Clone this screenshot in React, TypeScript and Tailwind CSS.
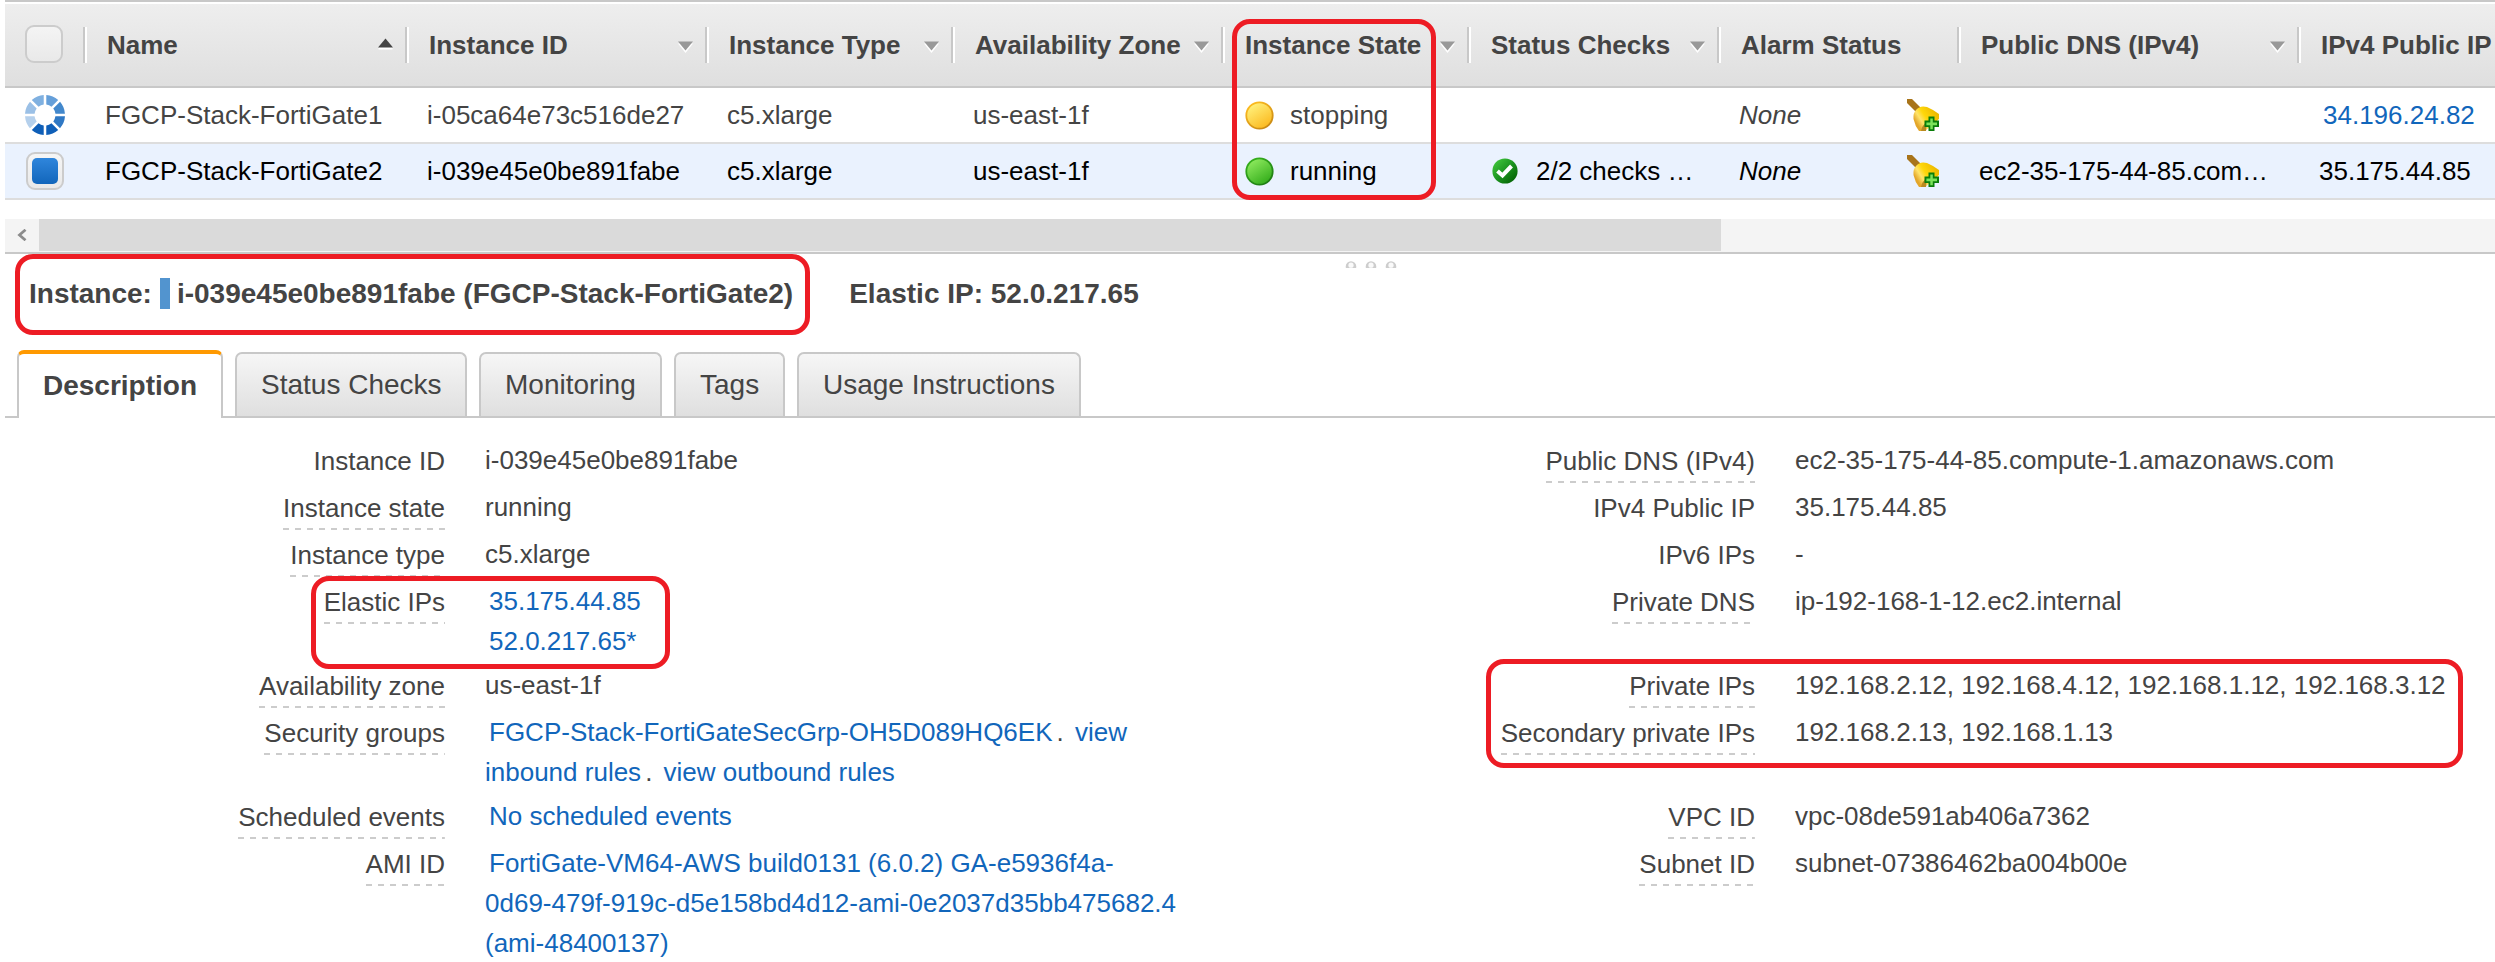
import type { ReactNode } from 'react';

const COLS = 'grid grid-cols-[78px_322px_300px_246px_270px_246px_250px_240px_340px_1fr]';

function Highlight({ className }: { className: string }) {
  return <div className={`absolute rounded-[18px] border-[5px] border-[#ed1c24] ${className}`} />;
}

function SortArrow({ up }: { up?: boolean }) {
  return up ? (
    <svg className="mr-3 mb-[2px] h-3 w-[15px] shrink-0" viewBox="0 0 15 12">
      <path d="M0.5 9.5 L7.5 2.5 L14.5 9.5 V11.5 H0.5Z" fill="#fff" />
      <path d="M0 9.5 L7.5 0.5 L15 9.5Z" fill="#444" />
    </svg>
  ) : (
    <svg className="mr-3 mt-[4px] h-3 w-[15px] shrink-0" viewBox="0 0 15 12">
      <path d="M0 2.5 L7.5 12 L15 2.5Z" fill="#fff" />
      <path d="M0 0.5 L7.5 9.5 L15 0.5Z" fill="#999" />
    </svg>
  );
}

function HeadCell({ label, sort }: { label: string; sort?: 'up' | 'down' }) {
  return (
    <div className="flex h-[82px] items-center">
      <div className="mb-[1px] h-9 w-1 shrink-0 border-l-2 border-r-2 border-l-[#c8c8c8] border-r-white" />
      <div className="flex-1 pl-5 font-bold leading-[82px]">{label}</div>
      {sort && <SortArrow up={sort === 'up'} />}
    </div>
  );
}

function Spinner() {
  const colors = ['#659fd9', '#4388cc', '#2f78c4', '#0f5fb8', '#0f5fb8', '#b5d0ec', '#9bc0e6', '#7fb0e0'];
  return (
    <svg className="ml-5 h-10 w-10" viewBox="-20 -20 40 40">
      {colors.map((c, i) => (
        <path key={i} d="M1.3 -20 A20 20 0 0 1 13.2 -15 L6.5 -8.3 A10.5 10.5 0 0 0 1.3 -10.4 Z" fill={c} transform={`rotate(${i * 45})`} />
      ))}
    </svg>
  );
}

function Ball({ id, from, to, edge }: { id: string; from: string; to: string; edge: string }) {
  return (
    <svg className="h-[29px] w-[29px] shrink-0" viewBox="0 0 29 29">
      <defs>
        <linearGradient id={id} x1="0.2" y1="0.1" x2="0.75" y2="0.95">
          <stop offset="0" stopColor={from} />
          <stop offset="1" stopColor={to} />
        </linearGradient>
        <linearGradient id={`${id}-rim`} x1="0.2" y1="0.1" x2="0.75" y2="0.95">
          <stop offset="0" stopColor={to} />
          <stop offset="1" stopColor={edge} />
        </linearGradient>
      </defs>
      <circle cx="14.5" cy="14.5" r="13.2" fill={`url(#${id})`} stroke={`url(#${id}-rim)`} strokeWidth="1.8" />
    </svg>
  );
}

function CheckBadge() {
  return (
    <svg className="h-[26px] w-[26px] shrink-0" viewBox="0 0 26 26">
      <defs>
        <linearGradient id="badge" x1="0.1" y1="0.1" x2="0.9" y2="0.9">
          <stop offset="0" stopColor="#3fc43a" />
          <stop offset="0.5" stopColor="#1c9420" />
          <stop offset="1" stopColor="#046204" />
        </linearGradient>
      </defs>
      <circle cx="13" cy="13" r="12.6" fill="url(#badge)" />
      <path d="M5.5 13 L10.5 17.5 L19.5 8" fill="none" stroke="#fff" strokeWidth="4" />
    </svg>
  );
}

function Bell() {
  return (
    <svg className="ml-auto mr-[18px] h-8 w-8 shrink-0" viewBox="0 0 32 32">
      <defs>
        <linearGradient id="bell" x1="0.1" y1="0.65" x2="0.85" y2="0.2">
          <stop offset="0" stopColor="#e3a62a" />
          <stop offset="0.25" stopColor="#ffe36a" />
          <stop offset="0.5" stopColor="#ffd70a" />
          <stop offset="1" stopColor="#eebb00" />
        </linearGradient>
      </defs>
      <path d="M0 0 H5 L14 9 L9 13 L0 4Z" fill="#a8741a" />
      <path d="M9 11 Q13 6 20 8 Q27 11 32 15 V20 L18 32 H12 Q8 27 6.5 20 Q6 14 9 11Z" fill="url(#bell)" />
      <path d="M14 32 Q15 26 20 23 L19 32Z" fill="#b98a20" />
      <path d="M21.5 17.5 H27.5 V21.5 H32 V28 H27.5 V32 H21.5 V28 H17.5 V21.5 H21.5Z" fill="#0a7d0a" />
      <path d="M23.3 19.5 H25.8 V23.6 H30 V26.2 H25.8 V30.3 H23.3 V26.2 H19.4 V23.6 H23.3Z" fill="#7be35a" />
    </svg>
  );
}

function TableHeader() {
  return (
    <div className="ml-[5px] border-y-2 border-[#c8c8c8] pt-[2px]">
      <div className={`${COLS} bg-linear-to-b from-[#eeeeee] to-[#dfdfdf] text-[#444]`}>
        <div className="flex h-[82px] items-center">
          <div className="mb-[2px] ml-5 h-[38px] w-[38px] rounded-[9px] border-2 border-[#ccc] bg-linear-to-b from-[#f4f4f4] to-[#e9e9e9]" />
        </div>
        <HeadCell label="Name" sort="up" />
        <HeadCell label="Instance ID" sort="down" />
        <HeadCell label="Instance Type" sort="down" />
        <HeadCell label="Availability Zone" sort="down" />
        <HeadCell label="Instance State" sort="down" />
        <HeadCell label="Status Checks" sort="down" />
        <HeadCell label="Alarm Status" />
        <HeadCell label="Public DNS (IPv4)" sort="down" />
        <HeadCell label="IPv4 Public IP" />
      </div>
    </div>
  );
}

function Cell({ children }: { children?: ReactNode }) {
  return <div className="flex h-[54px] items-center pl-[22px] leading-[54px]">{children}</div>;
}

function Field({ label, plain, children }: { label: string; plain?: boolean; children: ReactNode }) {
  return (
    <div className="flex min-h-[47px] leading-10">
      <div className="flex w-[440px] shrink-0 items-start justify-end pt-px">
        <div
          className={
            plain
              ? 'pb-[2px]'
              : 'bg-[repeating-linear-gradient(90deg,#ccc_0_6px,transparent_6px_12px)] bg-[length:100%_2px] bg-bottom bg-no-repeat pb-[2px]'
          }
        >
          {label}
        </div>
      </div>
      <div className="pb-1 pl-10">{children}</div>
    </div>
  );
}

function Link({ children }: { children: ReactNode }) {
  return <a className="px-1 text-[#1166bb]">{children}</a>;
}

function Tab({ width, children }: { width: string; children: ReactNode }) {
  return (
    <div className={`h-16 rounded-t-[7px] border-2 border-b-0 border-[#c8c8c8] bg-linear-to-b from-[#f6f6f6] to-[#dfdfdf] pl-6 leading-[62px] ${width}`}>
      {children}
    </div>
  );
}

export default function App() {
  return (
    <div className="relative h-[962px] w-[2495px] overflow-hidden whitespace-nowrap bg-white font-['Liberation_Sans',Arial,sans-serif] text-[26px] text-[#444]">
      <TableHeader />
      <div className={`${COLS} ml-[5px] border-b-2 border-[#ddd]`}>
        <div className="flex items-center"><Spinner /></div>
        <Cell>FGCP-Stack-FortiGate1</Cell>
        <Cell>i-05ca64e73c516de27</Cell>
        <Cell>c5.xlarge</Cell>
        <Cell>us-east-1f</Cell>
        <Cell>
          <div className="ml-[2px] mr-4 flex"><Ball id="yellow" from="#fff07a" to="#fbb91f" edge="#c98a14" /></div>
          stopping
        </Cell>
        <Cell />
        <Cell><span className="italic">None</span><Bell /></Cell>
        <Cell />
        <Cell><Link>34.196.24.82</Link></Cell>
      </div>
      <div className={`${COLS} ml-[5px] border-b-2 border-[#ddd] bg-[#eaf2fe] text-black`}>
        <div className="flex items-center">
          <div className="ml-[21px] h-[38px] w-[38px] rounded-[9px] border-2 border-[#ccc] bg-linear-to-b from-[#f6f6f6] to-[#e9e9e9] p-1">
            <div className="h-[26px] w-[26px] rounded-[5px] bg-linear-to-b from-[#2f86dc] to-[#1166bb]" />
          </div>
        </div>
        <Cell>FGCP-Stack-FortiGate2</Cell>
        <Cell>i-039e45e0be891fabe</Cell>
        <Cell>c5.xlarge</Cell>
        <Cell>us-east-1f</Cell>
        <Cell>
          <div className="ml-[2px] mr-4 flex"><Ball id="green" from="#8be85c" to="#34ad1b" edge="#1f7d14" /></div>
          running
        </Cell>
        <Cell>
          <div className="ml-[3px] mr-[18px] flex"><CheckBadge /></div>
          2/2 checks …
        </Cell>
        <Cell><span className="italic">None</span><Bell /></Cell>
        <Cell>ec2-35-175-44-85.com…</Cell>
        <Cell>35.175.44.85</Cell>
      </div>

      <div className="ml-[5px] mt-[19px] flex h-[35px] border-b-2 border-[#c8c8c8] bg-[#f4f4f4]">
        <div className="flex h-8 w-[34px] items-center justify-center">
          <svg className="mr-[1px] h-3 w-[10px]" viewBox="0 0 10 12">
            <path d="M8.5 0.8 L2.5 6 L8.5 11.2" fill="none" stroke="#8c8c8c" strokeWidth="2.8" />
          </svg>
        </div>
        <div className="h-8 w-[1682px] bg-[#dadada]" />
      </div>

      <div className="flex h-6 items-start pl-[1345px] pt-[7px]">
        <svg className="h-[7px] w-[52px]" viewBox="0 0 52 7">
          {[6, 26, 46].map((x) => (
            <g key={x}>
              <circle cx={x} cy="5.5" r="5.3" fill="#cdcdcd" />
              <circle cx={x} cy="4.2" r="2.6" fill="#fafafa" />
            </g>
          ))}
        </svg>
      </div>
      <div className="flex h-[72px] items-start pl-[29px] text-[28px] font-bold leading-8">
        <span>Instance:</span>
        <span className="ml-2 mr-[7px] h-[31px] w-[10px] bg-[#5294cf]" />
        <span>i-039e45e0be891fabe (FGCP-Stack-FortiGate2)</span>
        <span className="ml-14">Elastic IP: 52.0.217.65</span>
      </div>

      <div className="flex h-[68px] items-end text-[28px]">
        <div className="ml-[5px] h-[2px] w-3 bg-[#c8c8c8]" />
        <div className="h-[68px] w-[206px] overflow-hidden rounded-t-[7px] border-x-2 border-t-4 border-x-[#c8c8c8] border-t-[#ff9900] bg-white pl-6 font-bold leading-[63px]">
          Description
        </div>
        <div className="flex flex-1 gap-3 border-b-2 border-[#c8c8c8] pl-3">
          <Tab width="w-[232px]">Status Checks</Tab>
          <Tab width="w-[183px]">Monitoring</Tab>
          <Tab width="w-[111px]">Tags</Tab>
          <Tab width="w-[284px]">Usage Instructions</Tab>
        </div>
      </div>

      <div className="flex pl-[5px] pt-[22px]">
        <div className="w-[1310px]">
          <Field label="Instance ID" plain>i-039e45e0be891fabe</Field>
          <Field label="Instance state">running</Field>
          <Field label="Instance type">c5.xlarge</Field>
          <Field label="Elastic IPs"><Link>35.175.44.85</Link><br /><Link>52.0.217.65*</Link></Field>
          <Field label="Availability zone">us-east-1f</Field>
          <Field label="Security groups">
            <Link>FGCP-Stack-FortiGateSecGrp-OH5D089HQ6EK</Link>. <Link>view<br />inbound rules</Link>. <Link>view outbound rules</Link>
          </Field>
          <Field label="Scheduled events"><Link>No scheduled events</Link></Field>
          <Field label="AMI ID">
            <Link>FortiGate-VM64-AWS build0131 (6.0.2) GA-e5936f4a-<br />0d69-479f-919c-d5e158bd4d12-ami-0e2037d35bb475682.4<br />(ami-48400137)</Link>
          </Field>
        </div>
        <div>
          <Field label="Public DNS (IPv4)">ec2-35-175-44-85.compute-1.amazonaws.com</Field>
          <Field label="IPv4 Public IP" plain>35.175.44.85</Field>
          <Field label="IPv6 IPs" plain>-</Field>
          <div className="h-[84px]"><Field label="Private DNS">ip-192-168-1-12.ec2.internal</Field></div>
          <Field label="Private IPs">192.168.2.12, 192.168.4.12, 192.168.1.12, 192.168.3.12</Field>
          <div className="h-[84px]"><Field label="Secondary private IPs">192.168.2.13, 192.168.1.13</Field></div>
          <Field label="VPC ID">vpc-08de591ab406a7362</Field>
          <Field label="Subnet ID">subnet-07386462ba004b00e</Field>
        </div>
      </div>

      <Highlight className="left-[1232px] top-[19px] h-[181px] w-[204px]" />
      <Highlight className="left-[15px] top-[254px] h-[81px] w-[795px]" />
      <Highlight className="left-[311px] top-[576px] h-[93px] w-[359px]" />
      <Highlight className="left-[1486px] top-[659px] h-[109px] w-[977px]" />
    </div>
  );
}
